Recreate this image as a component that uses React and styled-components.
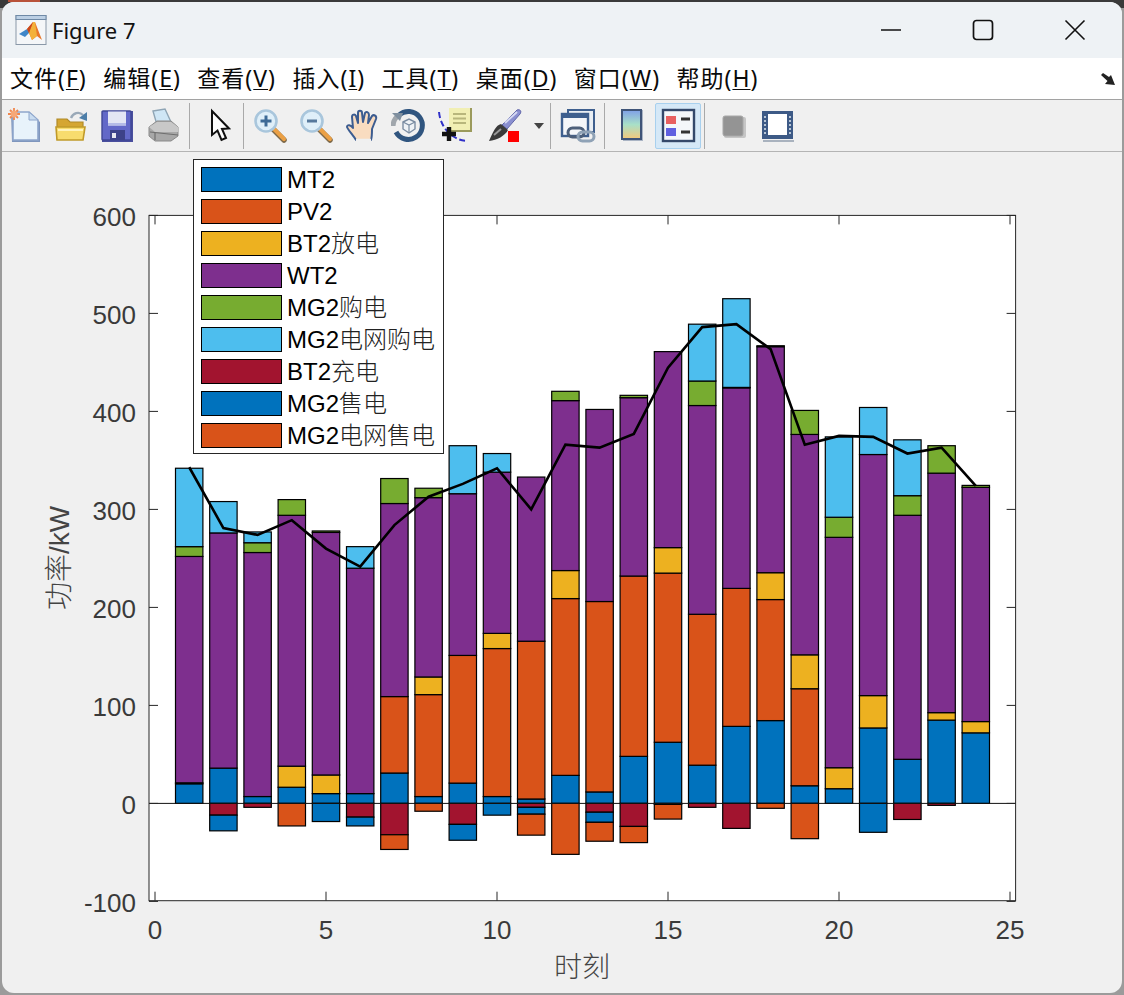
import React from "react";
import styled, { createGlobalStyle } from "styled-components";

const Global = createGlobalStyle`
  html, body { margin: 0; padding: 0; }
  body {
    width: 1124px;
    height: 995px;
    overflow: hidden;
    background:
      linear-gradient(90deg, #3a3a3a 8px, #b9533a 8px 40px, #3a3a3a 40px) top / 100% 2px no-repeat,
      linear-gradient(#3a3a3a 0 8px, #9b9b9b 8px);
  }
`;

const UI_FONT = `"Noto Sans", "Noto Sans CJK SC", sans-serif`;
const PLOT_FONT = `"Liberation Sans", "Noto Sans CJK SC", sans-serif`;

const Desktop = styled.div`
  padding: 2px;
  height: 995px;
  box-sizing: border-box;
`;
const Win = styled.div`
  height: 991px;
  width: 1120px;
  border-radius: 12px;
  overflow: hidden;
  display: flex;
  flex-direction: column;
  background: #f0f0f0;
`;
const TitleBar = styled.div`
  height: 56px;
  flex: none;
  background: #eef2f5;
  display: flex;
  align-items: center;
  padding: 0 1px 0 13px;
  color: #111;
`;
const TitleText = styled.span`
  font: 400 22px ${UI_FONT};
  margin-left: 5px;
  flex: 1;
`;
const WinButton = styled.div`
  width: ${(p) => p.$w}px;
  height: 56px;
  display: flex;
  align-items: center;
  justify-content: center;
`;
const MenuBar = styled.div`
  height: 41px;
  flex: none;
  background: #fff;
  border-bottom: 1px solid #a2a2a2;
  display: flex;
  align-items: center;
  padding-left: 8px;
  gap: 16.5px;
  position: relative;
`;
const MenuItem = styled.span`
  font: 400 23px/41px ${UI_FONT};
  letter-spacing: 1px;
  color: #0a0a0a;
  white-space: nowrap;
  u { text-underline-offset: 2px; text-decoration-thickness: 1px; }
`;
const MenuEnd = styled.div`
  margin-left: auto;
  margin-right: 6px;
  display: flex;
`;
const Toolbar = styled.div`
  height: 51px;
  flex: none;
  background: #f0f0f0;
  border-bottom: 1px solid #b4b4b4;
  display: flex;
  align-items: center;
`;
const ToolButton = styled.div`
  width: ${(p) => p.$w || 46}px;
  height: 46px;
  box-sizing: border-box;
  display: flex;
  align-items: center;
  justify-content: center;
  border-radius: 2px;
  border: 1px solid ${(p) => (p.$active ? "#a8d0ee" : "transparent")};
  background: ${(p) => (p.$active ? "#d5e8f7" : "transparent")};
`;
const Sep = styled.div`
  width: 1px;
  height: 46px;
  background: #a9a9a9;
  margin-left: ${(p) => p.$l}px;
  margin-right: ${(p) => p.$r}px;
`;
const Figure = styled.div`
  flex: 1;
  position: relative;
  min-height: 0;
`;
const Plot = styled.svg`
  display: block;
  width: 1120px;
  height: 841px;
`;
const Legend = styled.div`
  position: absolute;
  left: 191px;
  top: 7px;
  width: 251px;
  height: 295px;
  border: 1px solid #262626;
  background: #fff;
  box-sizing: border-box;
  padding: 7px 0 0 7px;
  display: flex;
  flex-direction: column;
  gap: 8px;
`;
const LegendRow = styled.div`
  display: flex;
  align-items: center;
  height: 24px;
`;
const Swatch = styled.div`
  width: 81px;
  height: 25px;
  box-sizing: border-box;
  border: 1px solid #000;
  background: ${(p) => p.$c};
  flex: none;
`;
const LegendLabel = styled.span`
  margin-left: 5px;
  padding-top: 2px;
  font: 400 24px/24px ${PLOT_FONT};
  color: #000;
  white-space: nowrap;
`;
const CjkRun = styled.span`
  font-weight: 300;
  color: #222;
`;

const C = { mt: "#0072BD", pv: "#D95319", bt: "#EDB120", wt: "#7E2F8E", mg: "#77AC30", gr: "#4DBEEE", ch: "#A2142F" };
const posColors = [C.mt, C.pv, C.bt, C.wt, C.mg, C.gr];
const negColors = [C.ch, C.mt, C.pv];

const bars = [
  [[20,21,21,252,262,342],[0,0,0]],
  [[36,36,36,276,276,308],[-12,-28,-28]],
  [[7,7,7,256,266,277],[-4,-4,-4]],
  [[16.5,16.5,38,294,310,310],[0,0,-23]],
  [[10,10,29,276.5,278,278],[0,-18.5,-18.5]],
  [[10,10,10,240,240,262],[-14,-23,-23]],
  [[31,109,109,306,331.5,331.5],[-32,-32,-47]],
  [[7,111,129,312,321.6,321.6],[0,0,-8]],
  [[20.7,151,151,316,316,365],[-21.4,-37.6,-37.6]],
  [[7,158,173.5,338,338,357],[0,-12,-12]],
  [[4.5,165.5,165.5,333,333,333],[-4,-11,-32.4]],
  [[28.6,209,237.6,411,420.5,420.5],[0,0,-52]],
  [[11.7,206,206,402,402,402],[-9,-19.3,-38.6]],
  [[48,232,232,414,416.4,416.4],[-23.5,-23.5,-40]],
  [[62.4,235,261,461,461,461],[0,-1,-16]],
  [[39,193,193,406,431,489],[-4,-4,-4]],
  [[78.6,219.4,219.4,424,424.5,515],[-25.5,-25.5,-25.5]],
  [[84.5,208,235.4,466,467,467],[0,0,-5]],
  [[18,117,151.6,376.5,401,401],[0,0,-36]],
  [[15,15,36.4,271.5,292,374],[0,0,0]],
  [[77,77,110,356,356,404],[0,-29.5,-29.5]],
  [[45,45,45,294,314,371],[-16.4,-16.4,-16.4]],
  [[85,85,92.6,337,365,365],[-2,-2,-2]],
  [[72,72,83.5,322.5,324.5,324.5],[0,0,0]],
];
const load = [343,281,274,289,260,241.6,284,313,326,342,300,366,363,377,444.6,486,489,463.5,366,375,374,357,363,324];

const X = (v) => 155 + 34.2 * v;
const Y = (v) => 803.4 - 0.98 * v;
const L = 149, R = 1015.6, T = 215.4, B = 900.7;

const legendItems = [
  [C.mt, "MT2", ""], [C.pv, "PV2", ""], [C.bt, "BT2", "放电"], [C.wt, "WT2", ""], [C.mg, "MG2", "购电"],
  [C.gr, "MG2", "电网购电"], [C.ch, "BT2", "充电"], [C.mt, "MG2", "售电"], [C.pv, "MG2", "电网售电"],
];

function Bars() {
  const w = 27.4;
  const out = [];
  bars.forEach(([pos, neg], i) => {
    const x = X(i + 1) - w / 2;
    const seg = (from, to, color, k) => {
      const y1 = Y(Math.max(from, to)), y2 = Y(Math.min(from, to));
      out.push(<rect key={i + k} x={x} y={y1} width={w} height={y2 - y1} fill={color} stroke="#000" strokeWidth="1.2" />);
    };
    let prev = 0;
    pos.forEach((v, j) => { if (v > prev) seg(prev, v, posColors[j], "p" + j); prev = v; });
    prev = 0;
    neg.forEach((v, j) => { if (v < prev) seg(prev, v, negColors[j], "n" + j); prev = v; });
  });
  return <g>{out}</g>;
}

function Axes() {
  const xt = [0, 5, 10, 15, 20, 25];
  const yt = [-100, 0, 100, 200, 300, 400, 500, 600];
  const tick = "#262626";
  return (
    <g>
      <rect x={L} y={T} width={R - L} height={B - T} fill="#fff" />
      <Bars />
      <line x1={L} x2={R} y1={Y(0)} y2={Y(0)} stroke="#111" strokeWidth="1" />
      <rect x={L} y={T} width={R - L} height={B - T} fill="none" stroke={tick} strokeWidth="1" />
      {xt.map((v) => (
        <g key={v}>
          <line x1={X(v)} x2={X(v)} y1={B} y2={B - 9} stroke={tick} />
          <line x1={X(v)} x2={X(v)} y1={T} y2={T + 9} stroke={tick} />
          <text x={X(v)} y={939} textAnchor="middle" fontFamily={PLOT_FONT} fontSize="26" fill="#3a3a3a">{v}</text>
        </g>
      ))}
      {yt.map((v) => (
        <g key={v}>
          <line x1={L} x2={L + 9} y1={Y(v)} y2={Y(v)} stroke={tick} />
          <line x1={R} x2={R - 9} y1={Y(v)} y2={Y(v)} stroke={tick} />
          <text x={136} y={Y(v) + 11} textAnchor="end" fontFamily={PLOT_FONT} fontSize="26" fill="#3a3a3a">{v}</text>
        </g>
      ))}
      <polyline
        points={load.map((v, i) => `${X(i + 1)},${Y(v)}`).join(" ")}
        fill="none" stroke="#000" strokeWidth="2.6" strokeLinejoin="miter"
      />
      <text x={582} y={977} textAnchor="middle" fontFamily={PLOT_FONT} fontSize="28" fontWeight="300" fill="#444">时刻</text>
      <text transform="translate(69 558) rotate(-90)" textAnchor="middle" fontFamily={PLOT_FONT} fontSize="28" fontWeight="300" fill="#444">功率/kW</text>
    </g>
  );
}

const I = ({ children, w = 36, h = 36 }) => (
  <svg width={w} height={h} viewBox={`0 0 ${w} ${h}`}>{children}</svg>
);

const MatlabIcon = () => (
  <svg width="32" height="32" viewBox="0 0 32 32">
    <rect x="1" y="1.5" width="30" height="29" fill="#f4f6f8" stroke="#8a98a8" />
    <rect x="1" y="1.5" width="30" height="4" fill="#bcd0e4" stroke="#6f8aa6" />
    <path d="M4 20 L12 15 L15 18 L10 23 Z" fill="#3f86c8" />
    <path d="M12 15 L18 8 L20 8 L27 26 L22 22 L17 26 L14 19 Z" fill="#e8772a" />
    <path d="M18 8 L20 8 L22 22 L17 26 L14 19 Z" fill="#f3b13a" />
    <path d="M18 8 L14 19 L12 15 Z" fill="#c9471c" />
  </svg>
);

const NewIcon = () => (
  <I>
    <path d="M4 5 H22 L33 14 V34 H5 Z" fill="#7f96bd" />
    <path d="M6 4 H22 L31 12 V32 H6 Z" fill="#e8f3fb" stroke="#8ea6cc" strokeWidth="1.6" />
    <path d="M22 4 V12 H31 Z" fill="#c9dcf0" stroke="#8ea6cc" />
    <g stroke="#f0864c" strokeWidth="1.8">
      <path d="M7 0 V12 M1 6 H13 M3 2 L11 10 M11 2 L3 10" />
    </g>
    <circle cx="7" cy="6" r="3.4" fill="#f6a878" />
  </I>
);
const OpenIcon = () => (
  <I>
    <path d="M4 11 H14 L17 14 H30 V31 H4 Z" fill="#d5a632" stroke="#b08a28" strokeWidth="1.2" />
    <path d="M4 32 L3 19 H32 L30 32 Z" fill="#f8dc6e" stroke="#c09a2a" strokeWidth="1.6" />
    <path d="M5 21 H30 V23 H5 Z" fill="#fff3bc" />
    <path d="M18 10 C20 5 26 3 30 7" fill="none" stroke="#9aa9b8" strokeWidth="2.4" />
    <path d="M34 4 L34 13 L26 10 Z" fill="#4d7ea8" />
  </I>
);
const SaveIcon = () => (
  <I>
    <rect x="3" y="3" width="31" height="31" fill="#4a4f9e" />
    <rect x="3" y="3" width="29" height="29" rx="1" fill="#6268c8" stroke="#3f4796" strokeWidth="1.4" />
    <rect x="9" y="3.5" width="18" height="14" fill="#e3e6f4" />
    <rect x="9" y="15" width="18" height="2.5" fill="#b5bce8" />
    <rect x="11" y="22" width="15" height="10" fill="#3d4289" />
    <rect x="13" y="25" width="4" height="5" fill="#e8e8ef" />
  </I>
);
const PrintIcon = () => (
  <I>
    <path d="M8 3 L20 1 L26 14 L12 17 Z" fill="#cfe6f5" stroke="#8fa5b5" strokeWidth="1.4" />
    <path d="M4 19 L12 13 H26 L33 19 V28 L26 33 H10 L4 28 Z" fill="#a8a8a8" stroke="#8a8a8a" />
    <path d="M4 19 L10 24 H33 L33 19 L26 14 H12 Z" fill="#c8c8c8" />
    <path d="M10 25 V32 M5 24 L33 27" stroke="#6f6f6f" strokeWidth="1.2" fill="none" />
  </I>
);
const ArrowIcon = () => (
  <I>
    <path d="M10 3 V27 L15.5 22.5 L19.5 32 L24 30 L20 21 L27 20.5 Z" fill="#fff" stroke="#111" strokeWidth="2" strokeLinejoin="miter" />
  </I>
);
const ZoomIcon = ({ minus }) => (
  <I>
    <path d="M20 21 L31 32" stroke="#7f6a4a" strokeWidth="5.5" strokeLinecap="round" />
    <path d="M20 20 L31 31" stroke="#eba045" strokeWidth="4" strokeLinecap="round" />
    <circle cx="13" cy="13" r="10.5" fill="#dfeff9" stroke="#a9c6dc" strokeWidth="2.6" />
    {minus
      ? <path d="M8 13 H18" stroke="#56789c" strokeWidth="3" />
      : <path d="M7.5 13 H18.5 M13 7.5 V18.5" stroke="#3d6a96" strokeWidth="3" />}
  </I>
);
const HandIcon = () => (
  <I>
    <path d="M11 32 C8 27 3 22 2 19 C2 16 6 17 8 20 L7 9 C7 6 10 6 11 8 L13 15 L13 5 C13 2 17 2 17 5 L18 14 L20 5 C21 3 24 4 24 7 L23 15 L27 8 C29 6 32 8 31 11 L27 21 C27 26 27 29 26 32 Z" fill="#f9dcc0" stroke="#3c5c90" strokeWidth="2" strokeLinejoin="round" />
    <path d="M11 32 H26" stroke="#f0f0f0" strokeWidth="2.4" />
  </I>
);
const RotateIcon = () => (
  <I>
    <path d="M8 7 A14 14 0 1 1 5 24" fill="none" stroke="#30557f" strokeWidth="5" />
    <path d="M2 18 A14 14 0 0 1 8 7" fill="none" stroke="#a0a6ac" strokeWidth="5" />
    <path d="M1 5 H12 L9 13 Z" fill="#7f8f9f" />
    <path d="M12 14 L18 11 L24 14 V21 L18 25 L12 21 Z" fill="#eef2f6" stroke="#7a8ca2" strokeWidth="1.4" />
    <path d="M12 14 L18 17 L24 14 M18 17 V25" fill="none" stroke="#7a8ca2" strokeWidth="1.2" />
  </I>
);
const CursorIcon = () => (
  <I>
    <rect x="12" y="0" width="23" height="24" fill="#9b9a5c" />
    <rect x="12" y="0" width="21" height="22" fill="#f1efb4" />
    <path d="M16 6 H29 M16 10.5 H29 M16 15 H29" stroke="#b8b67c" strokeWidth="2" />
    <path d="M2 4 C3 14 8 22 14 27 C20 31 24 33 31 33" fill="none" stroke="#3030c8" strokeWidth="2" strokeDasharray="6 3" />
    <path d="M12 19 V33 M5 26 H19" stroke="#111" strokeWidth="4.4" />
  </I>
);
const BrushIcon = () => (
  <I>
    <path d="M15 17 L30 2 C33 1 35 3 33 6 L20 21 Z" fill="#8a8fd0" stroke="#5f65a8" />
    <path d="M18 15 L30 4" stroke="#d5d8f2" strokeWidth="2" />
    <path d="M14 16 C9 17 6 24 2 33 C10 32 18 28 21 22 Z" fill="#3a3a3a" />
    <path d="M7 27 L14 21" stroke="#9a9a9a" strokeWidth="2" />
    <rect x="21" y="23" width="11" height="11" fill="#f00" />
  </I>
);
const DropIcon = () => (
  <svg width="12" height="8" viewBox="0 0 12 8"><path d="M1 1 H11 L6 7 Z" fill="#444" /></svg>
);
const LinkIcon = () => (
  <I>
    <rect x="8" y="2" width="26" height="22" fill="#e9eef3" stroke="#3e5f8e" strokeWidth="2" />
    <rect x="2" y="6" width="26" height="22" fill="#f4f6f9" stroke="#3e5f8e" strokeWidth="2.4" />
    <rect x="2" y="6" width="26" height="4" fill="#3e5f8e" />
    <rect x="8" y="20" width="16" height="9" rx="4.5" fill="none" stroke="#4c5f7a" strokeWidth="3" />
    <rect x="18" y="24" width="16" height="9" rx="4.5" fill="none" stroke="#8fa2b6" strokeWidth="3" />
  </I>
);
const ColorbarIcon = () => (
  <I>
    <defs>
      <linearGradient id="cb" x1="0" y1="0" x2="0" y2="1">
        <stop offset="0" stopColor="#7f9fe8" />
        <stop offset="0.5" stopColor="#a8e0c8" />
        <stop offset="1" stopColor="#f5c87a" />
      </linearGradient>
    </defs>
    <rect x="9" y="2" width="20" height="31" fill="#aab4c4" />
    <rect x="8" y="2" width="19" height="29" fill="url(#cb)" stroke="#3f5478" strokeWidth="2" />
  </I>
);
const LegendIcon = () => (
  <I>
    <rect x="3" y="2" width="31" height="31" fill="#f4f7fa" stroke="#34486a" strokeWidth="2.4" />
    <rect x="6" y="8" width="10" height="8" fill="#e86060" />
    <rect x="6" y="20" width="10" height="8" fill="#6060e0" />
    <path d="M21 11 H30 M21 24 H30" stroke="#333" strokeWidth="3" />
  </I>
);
const GrayIcon = () => (
  <I>
    <rect x="9" y="9" width="22" height="21" rx="2" fill="#c6c6c6" />
    <rect x="8" y="8" width="20" height="20" rx="2" fill="#949494" stroke="#a8a8a8" />
  </I>
);
const FrameIcon = () => (
  <I>
    <rect x="2" y="3" width="31" height="28" fill="#3d5a86" />
    <rect x="8" y="6" width="19" height="21" fill="#fff" />
    <path d="M5 8 V27 M30 8 V27" stroke="#b8c6d6" strokeWidth="2" strokeDasharray="2 2" />
    <path d="M3 33 H34" stroke="#a9b2be" strokeWidth="2" />
  </I>
);

const menu = [["文件", "F"], ["编辑", "E"], ["查看", "V"], ["插入", "I"], ["工具", "T"], ["桌面", "D"], ["窗口", "W"], ["帮助", "H"]];

export default function App() {
  return (
    <Desktop>
      <Global />
      <Win>
        <TitleBar>
          <MatlabIcon />
          <TitleText>Figure 7</TitleText>
          <WinButton $w={92}>
            <svg width="22" height="4" viewBox="0 0 22 4"><path d="M1 2 H21" stroke="#111" strokeWidth="1.6" /></svg>
          </WinButton>
          <WinButton $w={92}>
            <svg width="22" height="22" viewBox="0 0 22 22"><rect x="1.5" y="1.5" width="19" height="19" rx="3" fill="none" stroke="#111" strokeWidth="1.7" /></svg>
          </WinButton>
          <WinButton $w={92}>
            <svg width="22" height="22" viewBox="0 0 22 22"><path d="M1.5 1.5 L20.5 20.5 M20.5 1.5 L1.5 20.5" stroke="#111" strokeWidth="1.6" /></svg>
          </WinButton>
        </TitleBar>
        <MenuBar>
          {menu.map(([t, k]) => (
            <MenuItem key={k}>{t}(<u>{k}</u>)</MenuItem>
          ))}
          <MenuEnd>
            <svg width="16" height="14" viewBox="0 0 16 14">
              <path d="M1 3 L3 1 L9 5 L11 3 L15 13 L5 12 L7.5 9 Z" fill="#222" />
            </svg>
          </MenuEnd>
        </MenuBar>
        <Toolbar>
          <ToolButton><NewIcon /></ToolButton>
          <ToolButton><OpenIcon /></ToolButton>
          <ToolButton><SaveIcon /></ToolButton>
          <ToolButton><PrintIcon /></ToolButton>
          <Sep $l={3} $r={7} />
          <ToolButton><ArrowIcon /></ToolButton>
          <Sep $l={0} $r={4} />
          <ToolButton><ZoomIcon /></ToolButton>
          <ToolButton><ZoomIcon minus /></ToolButton>
          <ToolButton><HandIcon /></ToolButton>
          <ToolButton><RotateIcon /></ToolButton>
          <ToolButton><CursorIcon /></ToolButton>
          <ToolButton $w={54}><BrushIcon /></ToolButton>
          <ToolButton $w={14}><DropIcon /></ToolButton>
          <Sep $l={4} $r={4} />
          <ToolButton><LinkIcon /></ToolButton>
          <Sep $l={3} $r={4} />
          <ToolButton><ColorbarIcon /></ToolButton>
          <ToolButton $active><LegendIcon /></ToolButton>
          <Sep $l={3} $r={5} />
          <ToolButton><GrayIcon /></ToolButton>
          <ToolButton $w={44}><FrameIcon /></ToolButton>
        </Toolbar>
        <Figure>
          <Plot viewBox="2 152 1120 841">
            <Axes />
          </Plot>
          <Legend>
            {legendItems.map(([c, a, b], i) => (
              <LegendRow key={i}>
                <Swatch $c={c} />
                <LegendLabel>{a}{b && <CjkRun>{b}</CjkRun>}</LegendLabel>
              </LegendRow>
            ))}
          </Legend>
        </Figure>
      </Win>
    </Desktop>
  );
}
